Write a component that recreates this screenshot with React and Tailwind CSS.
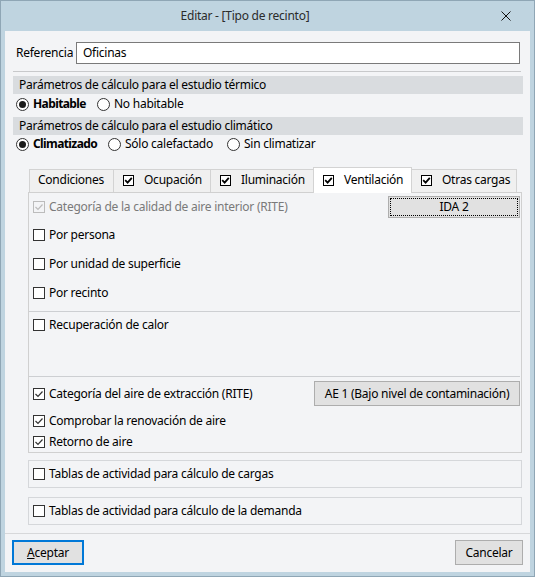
import React from "react";

function Check({ color = "#333", width = 1.2 }) {
  return (
    <svg width="10" height="10" viewBox="0 0 10 10" className="block">
      <path d="M1.5 5 L4 7.5 L8.5 2.5" fill="none" stroke={color} strokeWidth={width} />
    </svg>
  );
}

function Box({ checked, variant = "normal" }) {
  if (variant === "tab") {
    return (
      <span className="w-[11px] h-[11px] border border-black bg-white flex items-center justify-center shrink-0">
        {checked && (
          <svg width="9" height="9" viewBox="0 0 9 9" className="block">
            <path d="M1.2 4.2 L3.6 6.6 L7.8 1.8" fill="none" stroke="#000" strokeWidth="1.8" />
          </svg>
        )}
      </span>
    );
  }
  if (variant === "disabled") {
    return (
      <span className="w-[12px] h-[12px] border border-[#bcbcbc] bg-[#f3f4f6] flex items-center justify-center shrink-0">
        {checked && <Check color="#bcbcbc" />}
      </span>
    );
  }
  return (
    <span className="w-[12px] h-[12px] border border-[#333] bg-white flex items-center justify-center shrink-0">
      {checked && <Check color="#333" />}
    </span>
  );
}

function Radio({ on }) {
  return (
    <span className="w-[13px] h-[13px] rounded-full border border-[#333] bg-white flex items-center justify-center shrink-0">
      {on && <span className="w-[7px] h-[7px] rounded-full bg-[#1a1a1a]" />}
    </span>
  );
}

function CheckRow({ checked, variant, label, className = "" }) {
  return (
    <div className={"flex items-center gap-[4px] " + className}>
      <Box checked={checked} variant={variant} />
      <span className={variant === "disabled" ? "text-[#7a7a7a]" : ""}>{label}</span>
    </div>
  );
}

function Tab({ label, checked, selected, width, first }) {
  return (
    <div
      className={
        "flex items-center border border-b-0 " +
        (first ? "" : "-ml-px ") +
        (selected
          ? "h-[26px] -mb-px bg-white border-[#d3d3d3] relative z-10 pb-[1px] "
          : "h-[23px] bg-[#f0f0f0] border-[#d3d3d3] pb-[2px] ") +
        (checked === undefined ? "pl-[8px]" : "pl-[9px] gap-[10px]")
      }
      style={{ width }}
    >
      {checked !== undefined && <Box checked={checked} variant="tab" />}
      <span>{label}</span>
    </div>
  );
}

export default function App() {
  return (
    <div className="w-[535px] h-[577px] bg-[#bfd4e0] border border-[#8fa6b5] flex flex-col font-['Noto_Sans',sans-serif] text-[12px] text-black leading-none tracking-[-0.25px]">
      {/* Title bar */}
      <div className="h-[30px] flex items-center shrink-0">
        <div className="flex-1 text-center text-[#2b2b2b]">Editar - [Tipo de recinto]</div>
        <div className="w-[45px] flex items-center pl-[12px]">
          <svg width="10" height="10" viewBox="0 0 10 10" className="block">
            <path d="M0.5 0.5 L9.5 9.5 M9.5 0.5 L0.5 9.5" stroke="#111" strokeWidth="1" />
          </svg>
        </div>
      </div>

      {/* Content */}
      <div className="flex-1 mx-[4px] mb-[4px] bg-[#f3f4f6] flex flex-col">
        {/* Referencia */}
        <div className="mt-[11px] pl-[11px] flex items-center h-[22px]">
          <span className="w-[60px]">Referencia</span>
          <div className="w-[444px] h-[22px] border border-[#7a7a7a] bg-white flex items-center pl-[6px]">
            Oficinas
          </div>
        </div>

        <div className="mt-[7px] ml-[8px] w-[508px] h-px bg-[#c8c9cb]" />

        {/* Header 1 */}
        <div className="mt-[4px] ml-[8px] w-[510px] h-[18px] bg-[#d9dcdf] flex items-center pl-[6px]">
          Parámetros de cálculo para el estudio térmico
        </div>
        <div className="h-[20px] pl-[11px] flex items-center">
          <div className="w-[81px] flex items-center gap-[4px]">
            <Radio on />
            <span className="font-bold tracking-[-0.6px]">Habitable</span>
          </div>
          <div className="flex items-center gap-[4px]">
            <Radio />
            <span>No habitable</span>
          </div>
        </div>

        {/* Header 2 */}
        <div className="mt-[3px] ml-[8px] w-[510px] h-[18px] bg-[#d9dcdf] flex items-center pl-[6px]">
          Parámetros de cálculo para el estudio climático
        </div>
        <div className="h-[18px] pl-[11px] flex items-center">
          <div className="w-[92px] flex items-center gap-[4px]">
            <Radio on />
            <span className="font-bold tracking-[-0.6px]">Climatizado</span>
          </div>
          <div className="w-[119px] flex items-center gap-[4px]">
            <Radio />
            <span>Sólo calefactado</span>
          </div>
          <div className="flex items-center gap-[4px]">
            <Radio />
            <span>Sin climatizar</span>
          </div>
        </div>

        {/* Tabs */}
        <div className="mt-[14px] ml-[24px] h-[25px] flex items-end">
          <Tab label="Condiciones" width={85} first />
          <Tab label="Ocupación" checked width={98} />
          <Tab label="Iluminación" checked width={104} />
          <Tab label="Ventilación" checked selected width={99} />
          <Tab label="Otras cargas" checked width={106} />
        </div>

        {/* Pane */}
        <div className="ml-[23px] w-[494px] h-[261px] border border-[#d0d0d0] bg-[#f3f4f6] flex flex-col">
          <div className="h-[27px] flex items-center justify-between pl-[4px] pr-[1px]">
            <CheckRow checked variant="disabled" label="Categoría de la calidad de aire interior (RITE)" />
            <div className="w-[132px] h-[22px] bg-[#e1e1e1] border border-[#adadad] flex items-center justify-center outline-1 outline-dotted outline-black outline-offset-[-3px]">
              IDA 2
            </div>
          </div>
          <CheckRow label="Por persona" className="h-[29px] pl-[4px]" />
          <CheckRow label="Por unidad de superficie" className="h-[29px] pl-[4px]" />
          <CheckRow label="Por recinto" className="h-[29px] pl-[4px]" />
          <div className="mt-[4px] mr-[1px] h-px bg-[#cdcfd2]" />
          <div className="h-[64px]">
            <CheckRow label="Recuperación de calor" className="h-[26px] pl-[4px]" />
          </div>
          <div className="mr-[1px] h-px bg-[#cdcfd2]" />
          <div className="h-[33px] flex items-center justify-between pl-[4px] pr-[1px]">
            <CheckRow checked label="Categoría del aire de extracción (RITE)" />
            <div className="w-[206px] h-[25px] bg-[#e1e1e1] border border-[#adadad] flex items-center justify-center">
              AE 1 (Bajo nivel de contaminación)
            </div>
          </div>
          <CheckRow checked label="Comprobar la renovación de aire" className="h-[21px] pl-[4px]" />
          <CheckRow checked label="Retorno de aire" className="h-[21px] pl-[4px]" />
        </div>

        {/* Group boxes */}
        <div className="mt-[7px] ml-[23px] w-[494px] h-[28px] border border-[#d5d7da] flex items-center pl-[4px]">
          <CheckRow label="Tablas de actividad para cálculo de cargas" />
        </div>
        <div className="mt-[9px] ml-[23px] w-[494px] h-[28px] border border-[#d5d7da] flex items-center pl-[4px]">
          <CheckRow label="Tablas de actividad para cálculo de la demanda" />
        </div>

        <div className="mt-[8px] h-px bg-[#d7d8da]" />

        {/* Footer */}
        <div className="mt-[6px] px-[7px] flex justify-between">
          <div className="w-[72px] h-[25px] border-2 border-[#0078d7] bg-[#e1e1e1] flex items-center justify-center">
            <span>
              <span className="underline">A</span>ceptar
            </span>
          </div>
          <div className="w-[68px] h-[25px] border border-[#adadad] bg-[#e1e1e1] flex items-center justify-center">
            Cancelar
          </div>
        </div>
      </div>
    </div>
  );
}
